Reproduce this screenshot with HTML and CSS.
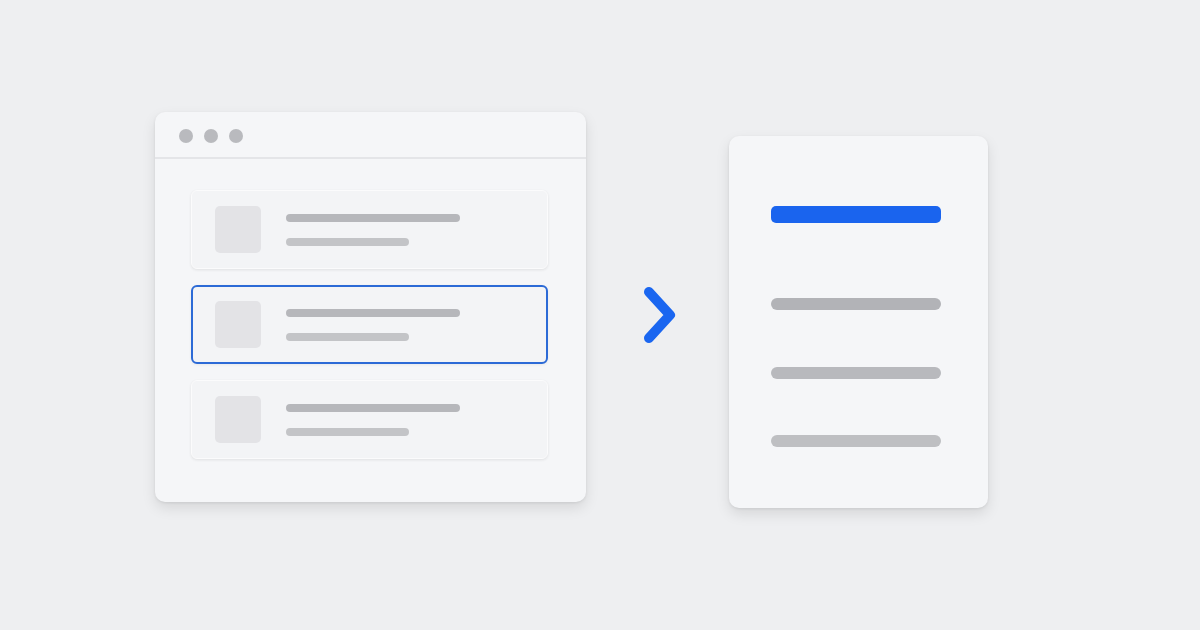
FILE: index.html
```html
<!DOCTYPE html>
<html>
<head>
<meta charset="utf-8">
<link rel="stylesheet" href="styles.css">
</head>
<body>
<div class="stage">
  <div class="window">
    <div class="titlebar">
      <span class="dot"></span><span class="dot"></span><span class="dot"></span>
    </div>
    <div class="list">
      <div class="item">
        <div class="thumb"></div>
        <div class="lines"><div class="line l1"></div><div class="line l2"></div></div>
      </div>
      <div class="item selected">
        <div class="thumb"></div>
        <div class="lines"><div class="line l1"></div><div class="line l2"></div></div>
      </div>
      <div class="item">
        <div class="thumb"></div>
        <div class="lines"><div class="line l1"></div><div class="line l2"></div></div>
      </div>
    </div>
  </div>
  <div class="arrow">
    <svg width="34" height="58" viewBox="0 0 34 58"><polyline points="7,6 28,29 7,52" fill="none" stroke="#1a66f0" stroke-width="10" stroke-linecap="round" stroke-linejoin="round"/></svg>
  </div>
  <div class="detail">
    <div class="bar blue"></div>
    <div class="bar grey b1"></div>
    <div class="bar grey b2"></div>
    <div class="bar grey b3"></div>
  </div>
</div>
</body>
</html>
```

FILE: styles.css
```css
html, body { margin: 0; padding: 0; }
body {
  background: #eeeff1;
  width: 1200px;
  height: 630px;
  overflow: hidden;
  font-family: "Liberation Sans", sans-serif;
}
.stage {
  display: flex;
  align-items: flex-start;
  padding: 112px 0 0 155px;
}
.window {
  width: 431px;
  height: 390px;
  box-sizing: border-box;
  background: #f5f6f8;
  border-radius: 10px;
  box-shadow: 0 6px 14px rgba(0,0,0,0.10), 0 1px 3px rgba(0,0,0,0.08);
  display: flex;
  flex-direction: column;
}
.titlebar {
  height: 47px;
  border-bottom: 2px solid #e4e5e8;
  display: flex;
  align-items: center;
  gap: 11px;
  padding-left: 24px;
  padding-top: 3px;
  box-sizing: border-box;
}
.dot {
  width: 14px; height: 14px; border-radius: 50%;
  background: #b9babe;
}
.list {
  display: flex;
  flex-direction: column;
  gap: 16px;
  padding: 31px 38px 0 36px;
}
.item {
  height: 79px;
  box-sizing: border-box;
  background: #f3f4f6;
  border: 1px solid #fbfbfc;
  border-radius: 6px;
  box-shadow: 0 1px 3px rgba(0,0,0,0.09);
  display: flex;
  align-items: center;
  padding-left: 23px;
  gap: 25px;
}
.item.selected {
  border: 2px solid #2c6ad6;
  padding-left: 22px;
  box-shadow: 0 1px 3px rgba(0,0,0,0.06);
}
.thumb {
  width: 46px; height: 47px;
  border-radius: 5px;
  background: #e3e3e6;
}
.lines {
  display: flex;
  flex-direction: column;
  gap: 16px;
}
.line { height: 8px; border-radius: 4px; }
.l1 { width: 174px; background: #b6b7bb; }
.l2 { width: 123px; background: #c3c4c7; }
.arrow {
  margin: 174px 0 0 56px;
  width: 34px;
  height: 58px;
}
.arrow svg { display: block; }
.detail {
  margin: 24px 0 0 53px;
  width: 259px;
  height: 372px;
  box-sizing: border-box;
  background: #f5f6f8;
  border-radius: 10px;
  box-shadow: 0 6px 14px rgba(0,0,0,0.10), 0 1px 3px rgba(0,0,0,0.08);
  padding: 70px 0 0 42px;
  display: flex;
  flex-direction: column;
}
.bar { width: 170px; border-radius: 6px; }
.blue { height: 17px; background: #1a64ee; border-radius: 5px; }
.grey { height: 12px; background: #b8b9bd; }
.b1 { margin-top: 75px; background: #b2b3b7; }
.b2 { margin-top: 57px; }
.b3 { margin-top: 56px; background: #bebfc2; }
```
